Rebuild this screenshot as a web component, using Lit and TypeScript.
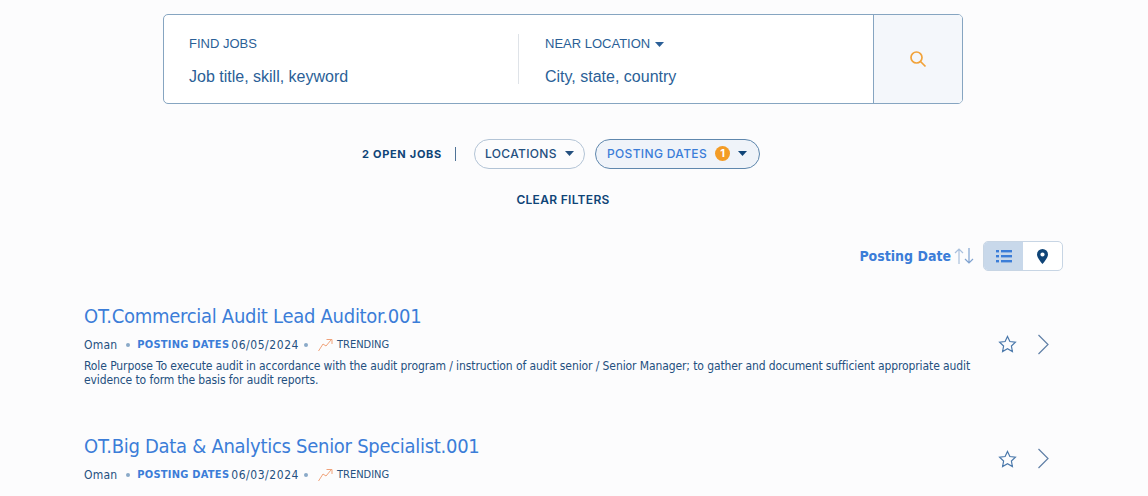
import { LitElement, html, css, svg } from "lit";
import { customElement } from "lit/decorators.js";

const caret = svg`<svg class="caret" width="9" height="5" viewBox="0 0 9 5"><path d="M0 0h9L4.5 5z" fill="currentColor"/></svg>`;

const jobs = [
  {
    title: "OT.Commercial Audit Lead Auditor.001",
    date: "06/05/2024",
    desc: "Role Purpose To execute audit in accordance with the audit program / instruction of audit senior / Senior Manager; to gather and document sufficient appropriate audit evidence to form the basis for audit reports.",
  },
  { title: "OT.Big Data & Analytics Senior Specialist.001", date: "06/03/2024", desc: "" },
];

@customElement("app-root")
export class AppRoot extends LitElement {
  static styles = css`
    :host {
      display: block;
      height: 496px;
      overflow: hidden;
      background: #fcfcfd;
      font-family: "Liberation Sans", Arial, sans-serif;
      color: #0f4477;
    }
    .top { padding-right: 22px; }
    .search {
      box-sizing: border-box;
      width: 800px;
      height: 90px;
      margin: 14px auto 0;
      display: flex;
      background: #fff;
      border: 1px solid #86a5c1;
      border-radius: 5px;
      overflow: hidden;
    }
    .field {
      box-sizing: border-box;
      padding: 21px 0 0 25px;
      color: #2b5f97;
    }
    .field.one { width: 354px; }
    .field.two { flex: 1; padding-left: 26px; }
    .divider { width: 1px; height: 50px; margin-top: 19px; background: #dfe3e8; }
    .label { font-size: 13px; line-height: 16px; height: 16px; display: flex; align-items: center; gap: 5px; }
    .hint { font-size: 16px; line-height: 18px; margin-top: 16px; }
    .go {
      width: 88px;
      background: #f4f7fb;
      border-left: 1px solid #86a5c1;
      display: flex;
      align-items: center;
      justify-content: center;
    }
    .filters {
      display: flex;
      justify-content: center;
      align-items: center;
      margin-top: 35px;
      height: 30px;
      font-family: "Inter", sans-serif;
      font-size: 12px;
      font-weight: 500;
      letter-spacing: 0.35px;
      padding-right: 4px;
    }
    .count { font-weight: 700; font-size: 11px; letter-spacing: 0.7px; color: #0f4477; }
    .sep { width: 1px; height: 14px; background: #4f7397; margin: 0 18px 0 13px; }
    .pill {
      box-sizing: border-box;
      height: 30px;
      border-radius: 15px;
      border: 1px solid #b3c4d6;
      display: flex;
      align-items: center;
      padding: 0 10px 2px 10px;
      color: #24507f;
    }
    .pill.locations { width: 111px; justify-content: space-between; }
    .pill.dates {
      width: 165px;
      margin-left: 10px;
      background: #eff3f9;
      border-color: #5f87ad;
      color: #3b7dd8;
      padding: 0 11px 2px;
    }
    .pill.dates .caret { color: #0f4477; margin-left: 8px; }
    .badge {
      width: 15px;
      height: 15px;
      border-radius: 50%;
      background: #f39c26;
      color: #fff;
      font-size: 11px;
      font-weight: 700;
      display: flex;
      align-items: center;
      justify-content: center;
      margin-left: 8px;
      letter-spacing: 0;
    }
    .clear {
      text-align: center;
      margin-top: 24px;
      font-family: "Inter", sans-serif;
      font-size: 12px;
      line-height: 14px;
      font-weight: 600;
      letter-spacing: 0.3px;
      color: #0f4477;
    }
    .sortbar {
      display: flex;
      justify-content: flex-end;
      align-items: center;
      height: 30px;
      margin: 34px 85px 0 0;
    }
    .sort {
      font-family: "DejaVu Sans", sans-serif;
      font-stretch: condensed;
      font-weight: 700;
      font-size: 14px;
      color: #3b7dd8;
    }
    .arrows { margin: 0 9px 0 3px; display: block; }
    .toggle {
      display: flex;
      width: 80px;
      height: 30px;
      box-sizing: border-box;
      border: 1px solid #c7d5e4;
      border-radius: 5px;
      overflow: hidden;
      background: #fff;
    }
    .toggle div { flex: 1; display: flex; align-items: center; justify-content: center; }
    .toggle .on { background: #c8d8ea; }
    .list { padding: 0 85px 0 84px; font-family: "DejaVu Sans", sans-serif; font-stretch: condensed; }
    .job { display: flex; align-items: center; }
    .job.first { margin-top: 30px; }
    .job.second { margin-top: 44px; }
    .body { width: 888px; }
    .title { font-size: 20px; line-height: 30px; color: #3b7dd8; font-weight: 400; margin: 0; letter-spacing: -0.28px; }
    .meta { display: flex; align-items: center; font-size: 12px; line-height: 16px; margin-top: 6px; color: #24507f; }
    .place { letter-spacing: 0.2px; }
    .dot { width: 4px; height: 4px; border-radius: 50%; background: #8aa9c8; margin: 0 7px 0 9px; }
    .meta .k { font-weight: 700; font-size: 11px; letter-spacing: 0.25px; color: #3b7dd8; margin-right: 2px; }
    .meta .d { letter-spacing: 0.55px; }
    .dot.after { margin: 0 0 0 5px; }
    .meta .t { font-size: 11px; margin-left: 4px; }
    .meta svg { margin-left: 10px; }
    .desc { font-size: 12px; line-height: 14px; margin: 6px 0 0; color: #24507f; letter-spacing: -0.1px; }
    .actions { display: flex; align-items: center; margin-left: 26px; gap: 20px; }
    .job.first .actions { margin-top: 0; }
    .job.second .actions { margin-top: 3px; }
  `;

  render() {
    return html`
      <div class="top">
        <div class="search">
          <div class="field one">
            <div class="label">FIND JOBS</div>
            <div class="hint">Job title, skill, keyword</div>
          </div>
          <div class="divider"></div>
          <div class="field two">
            <div class="label">NEAR LOCATION ${caret}</div>
            <div class="hint">City, state, country</div>
          </div>
          <div class="go">
            <svg width="18" height="18" viewBox="0 0 18 18" fill="none" stroke="#f2a33a" stroke-width="1.7">
              <circle cx="7.5" cy="7.5" r="5.5" /><path d="M11.5 11.5L16.5 16.5" />
            </svg>
          </div>
        </div>

        <div class="filters">
          <span class="count">2 OPEN JOBS</span><span class="sep"></span>
          <div class="pill locations">LOCATIONS ${caret}</div>
          <div class="pill dates">POSTING DATES <span class="badge">1</span> ${caret}</div>
        </div>
        <div class="clear">CLEAR FILTERS</div>
      </div>

      <div class="sortbar">
        <span class="sort">Posting Date</span>
        <svg class="arrows" width="20" height="18" viewBox="0 0 20 18" fill="none" stroke-width="1.2">
          <path d="M5 17V2M1 6l4-4 4 4" stroke="#a9c0dd" />
          <path d="M15 1v15M11 12l4 4 4-4" stroke="#7fa2d0" />
        </svg>
        <div class="toggle">
          <div class="on">
            <svg width="16" height="14" viewBox="0 0 16 14" fill="#3b7dd8">
              <rect x="0" y="1" width="3" height="2.4" /><rect x="5" y="1" width="11" height="2.4" />
              <rect x="0" y="6" width="3" height="2.4" /><rect x="5" y="6" width="11" height="2.4" />
              <rect x="0" y="11" width="3" height="2.4" /><rect x="5" y="11" width="11" height="2.4" />
            </svg>
          </div>
          <div>
            <svg width="11" height="15" viewBox="0 0 11 15">
              <path fill-rule="evenodd" fill="#0f4477" d="M5.5 0A5.5 5.5 0 0 0 0 5.5C0 9 5.5 15 5.5 15S11 9 11 5.5A5.5 5.5 0 0 0 5.5 0zm0 3.4a2.1 2.1 0 1 1 0 4.2 2.1 2.1 0 0 1 0-4.2z" />
            </svg>
          </div>
        </div>
      </div>

      <div class="list">
        ${jobs.map(
          (j, i) => html`
            <div class="job ${i === 0 ? "first" : "second"}">
              <div class="body">
                <h3 class="title">${j.title}</h3>
                <div class="meta">
                  <span class="place">Oman</span><span class="dot"></span>
                  <span class="k">POSTING DATES</span><span class="d">${j.date}</span><span class="dot after"></span>
                  <svg width="15" height="14" viewBox="0 0 15 14" fill="none" stroke="#f0a27a" stroke-width="1">
                    <path d="M0.500 13l4.500-7 3 2 5-6M8.500 1.500h5.500v4.500" />
                  </svg>
                  <span class="t">TRENDING</span>
                </div>
                ${j.desc ? html`<p class="desc">${j.desc}</p>` : ""}
              </div>
              <div class="actions">
                <svg width="19" height="18" viewBox="0 0 19 18" fill="none" stroke="#4a78ab" stroke-width="1.2">
                  <path d="M9.500 1.500l2.400 5 5.500.7-4 3.800 1 5.500-4.900-2.700-4.900 2.700 1-5.500-4-3.800 5.500-.7z" />
                </svg>
                <svg width="12" height="21" viewBox="0 0 12 21" fill="none" stroke="#5f7fa6" stroke-width="1.2">
                  <path d="M1.500 1l9.500 9.500L1.500 20" />
                </svg>
              </div>
            </div>
          `,
        )}
      </div>
    `;
  }
}
